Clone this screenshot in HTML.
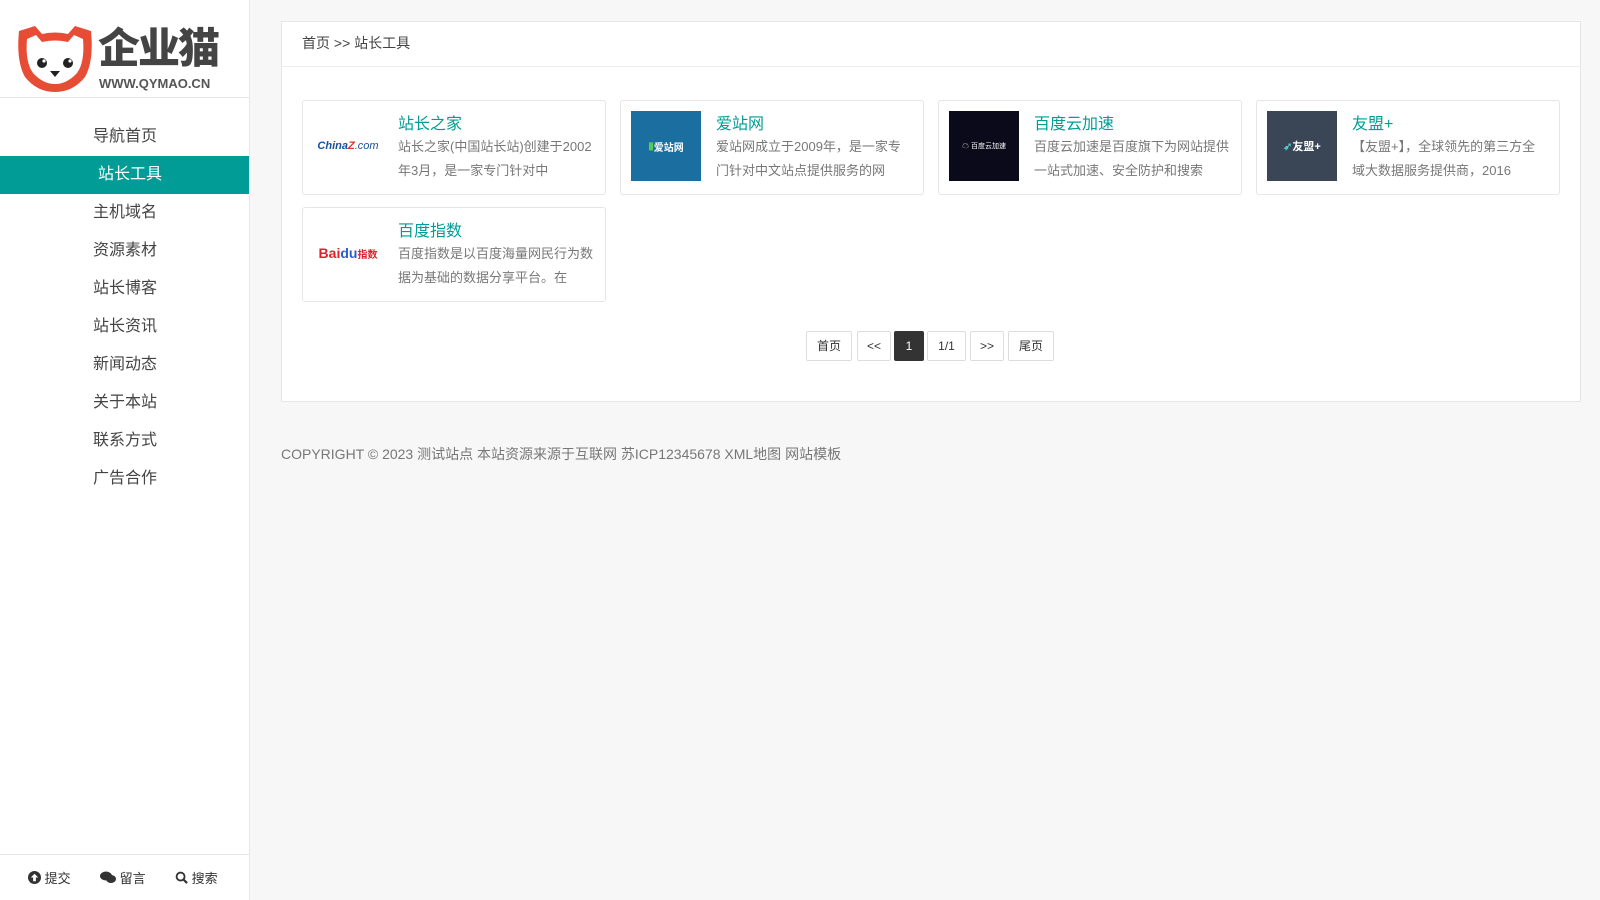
<!DOCTYPE html>
<html><head><meta charset="utf-8"><style>
*{margin:0;padding:0;box-sizing:border-box}
body{width:1600px;height:900px;background:#f7f7f7;font-family:"Liberation Sans","Noto Sans CJK SC",sans-serif;position:relative;overflow:hidden;color:#333}
.side{position:absolute;left:0;top:0;width:250px;height:900px;background:#fff;border-right:1px solid #e6e6e6}
.logo{height:98px;border-bottom:1px solid #e6e6e6;position:relative}
.nav{margin-top:20px}
.nav div{height:38px;line-height:38px;font-size:16px;color:#444;padding-left:93px}
.nav div.on{background:#029c96;color:#fff;padding-left:98px}
.bot{position:absolute;bottom:0;left:0;width:249px;height:46px;border-top:1px solid #e6e6e6;font-size:13px;color:#333;display:flex;align-items:center}
.bot span{display:flex;align-items:center;position:absolute}
.main{position:absolute;left:281px;top:21px;width:1300px;height:381px;background:#fff;border:1px solid #e6e6e6}
.bc{height:45px;line-height:42px;border-bottom:1px solid #eee;padding-left:20px;font-size:14px;color:#444}
.card{position:absolute;width:304px;height:95px;border:1px solid #e6e6e6;border-radius:3px;background:#fff}
.card .im{position:absolute;left:10px;top:10px;width:70px;height:70px;display:flex;align-items:center;justify-content:center;font-size:9px;color:#fff}
.card h3{position:absolute;left:95px;top:9px;font-size:16px;font-weight:normal;color:#029c96}
.card p{position:absolute;left:95px;top:34px;width:196px;font-size:13px;line-height:24px;color:#777;height:48px;overflow:hidden}
.pg{position:absolute;top:309px;height:30px;border:1px solid #ddd;border-radius:2px;font-size:12px;line-height:28px;text-align:center;color:#333}
.foot{position:absolute;left:281px;top:444px;font-size:14px;color:#777}
</style></head><body>
<div class="side">
 <div class="logo">
  <svg width="76" height="68" style="position:absolute;left:17px;top:25px" viewBox="0 0 76 68"><path d="M2 6 L18 1 L25 9 Q38 6 51 9 L58 1 L74 6 Q77 36 68 52 Q56 67 38 67 Q20 67 8 52 Q-1 36 2 6Z" fill="#e74c35"/><path d="M10 14 L19 10 L25 17 Q38 14 51 17 L57 10 L66 14 Q68 37 60 48 Q50 59 38 59 Q26 59 16 48 Q8 37 10 14Z" fill="#fff"/><circle cx="25" cy="38" r="5" fill="#222"/><circle cx="51" cy="38" r="5" fill="#222"/><circle cx="27" cy="36" r="1.6" fill="#fff"/><circle cx="53" cy="36" r="1.6" fill="#fff"/><path d="M33 46 L43 46 L38 52Z" fill="#222"/></svg>
  <div style="position:absolute;left:98px;top:26px;font-size:42px;line-height:46px;font-weight:900;color:#444;letter-spacing:-2px">企业猫</div>
  <div style="position:absolute;left:99px;top:76px;font-size:13px;font-weight:bold;color:#555">WWW.QYMAO.CN</div>
 </div>
 <div class="nav">
  <div>导航首页</div><div class="on">站长工具</div><div>主机域名</div><div>资源素材</div><div>站长博客</div><div>站长资讯</div><div>新闻动态</div><div>关于本站</div><div>联系方式</div><div>广告合作</div>
 </div>
 <div class="bot">
  <span style="left:28px"><svg width="13" height="13" viewBox="0 0 14 14"><circle cx="7" cy="7" r="7" fill="#333"/><path d="M7 3 L11 7 H8.5 V11 H5.5 V7 H3Z" fill="#fff"/></svg>&nbsp;提交</span>
  <span style="left:100px"><svg width="16" height="13" viewBox="0 0 16 13"><ellipse cx="6" cy="5" rx="6" ry="4.5" fill="#333"/><ellipse cx="11" cy="8" rx="5" ry="4" fill="#333"/></svg>&nbsp;留言</span>
  <span style="left:175px"><svg width="13" height="13" viewBox="0 0 14 14"><circle cx="6" cy="6" r="4.3" stroke="#333" stroke-width="2" fill="none"/><path d="M9 9 L13 13" stroke="#333" stroke-width="2.4"/></svg>&nbsp;搜索</span>
 </div>
</div>
<div class="main">
 <div class="bc">首页 &gt;&gt; 站长工具</div>
 <div class="card" style="left:20px;top:78px"><div class="im" style="color:#1a4f9c;font-size:11px;font-weight:bold;font-style:italic">China<span style="color:#d33">Z</span><span style="font-weight:normal">.com</span></div><h3>站长之家</h3><p>站长之家(中国站长站)创建于2002年3月，是一家专门针对中</p></div>
 <div class="card" style="left:338px;top:78px"><div class="im" style="background:#1a6fa0;font-size:10px;font-weight:bold"><span style="color:#5c5">▮</span>爱站网</div><h3>爱站网</h3><p>爱站网成立于2009年，是一家专门针对中文站点提供服务的网</p></div>
 <div class="card" style="left:656px;top:78px"><div class="im" style="background:#0a0a1a;font-size:7px">☁ 百度云加速</div><h3>百度云加速</h3><p>百度云加速是百度旗下为网站提供一站式加速、安全防护和搜索</p></div>
 <div class="card" style="left:974px;top:78px"><div class="im" style="background:#3a4556;font-size:11px;font-weight:bold"><span style="color:#5cc">➶</span>友盟+</div><h3>友盟+</h3><p>【友盟+】，全球领先的第三方全域大数据服务提供商，2016</p></div>
 <div class="card" style="left:20px;top:185px"><div class="im" style="color:#d9232d;font-size:14px;font-weight:bold">Bai<span style="color:#2a5fc9">du</span><span style="font-size:10px">指数</span></div><h3>百度指数</h3><p>百度指数是以百度海量网民行为数据为基础的数据分享平台。在</p></div>
 <div class="pg" style="left:524px;width:46px">首页</div>
 <div class="pg" style="left:575px;width:34px">&lt;&lt;</div>
 <div class="pg" style="left:612px;width:30px;background:#333;color:#fff;border-color:#333">1</div>
 <div class="pg" style="left:645px;width:39px">1/1</div>
 <div class="pg" style="left:688px;width:34px">&gt;&gt;</div>
 <div class="pg" style="left:726px;width:46px">尾页</div>
</div>
<div class="foot">COPYRIGHT © 2023 测试站点 本站资源来源于互联网 苏ICP12345678 XML地图 网站模板</div>
</body></html>
